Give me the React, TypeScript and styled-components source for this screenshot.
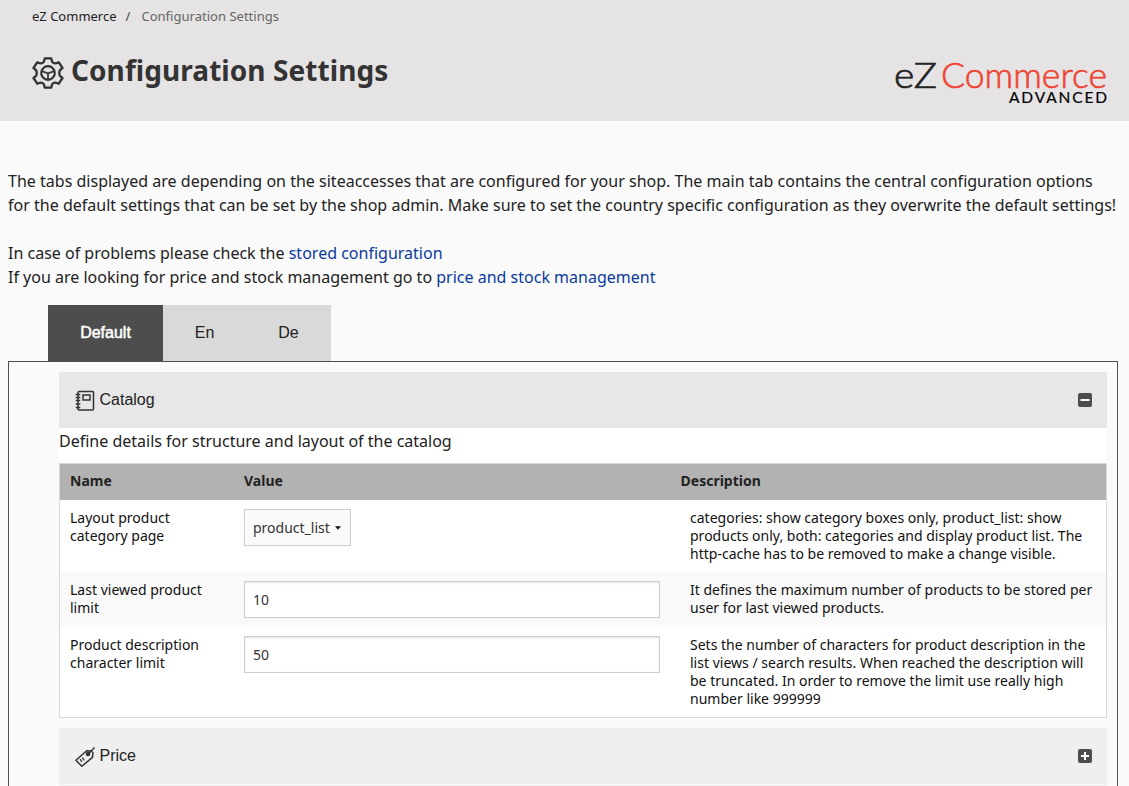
import React from "react";
import styled, { createGlobalStyle } from "styled-components";

const noto = `"Noto Sans", "Open Sans", sans-serif`;
const helvetica = `"Liberation Sans", Arial, sans-serif`;

const GlobalStyle = createGlobalStyle`
  *, *::before, *::after { box-sizing: border-box; }
  body { margin: 0; background: #fafafa; color: #222; font-family: ${noto}; overflow: hidden; }
`;

const Page = styled.div`
  height: 786px;
  overflow: hidden;
`;
const Header = styled.header`
  height: 121px;
  background: #e5e3e4;
  padding: 7px 21px 0 32px;
`;
const Breadcrumb = styled.nav`
  display: flex;
  font-size: 13px;
  line-height: 18px;
  color: #222;
`;
const Slash = styled.span`
  margin: 0 11px 0 9px;
  color: #444;
`;
const Current = styled.span`
  color: #666;
  letter-spacing: 0.02px;
`;
const TitleRow = styled.div`
  display: flex;
  justify-content: space-between;
  align-items: flex-start;
`;
const Title = styled.h1`
  display: flex;
  gap: 7px;
  margin: 25px 0 0;
  font-size: 28px;
  line-height: 40px;
  font-weight: 700;
  letter-spacing: 0.07px;
  color: #333;
  white-space: nowrap;
  svg { margin-top: 7px; }
`;
const Logo = styled.svg`
  margin-top: 20px;
`;
const Main = styled.main`
  padding: 48px 0 0 8px;
`;
const Intro = styled.p`
  margin: 0 0 24px;
  font-size: 16px;
  line-height: 24px;
  letter-spacing: 0.01px;
  white-space: nowrap;
`;
const Links = styled(Intro)`
  margin-bottom: 16px;
  letter-spacing: 0.004px;
`;
const Link = styled.a`
  color: #0b3a9c;
  text-decoration: none;
`;
const Tabs = styled.div`
  display: flex;
  margin-left: 40px;
`;
const Tab = styled.button<{ $active?: boolean; $width: number }>`
  width: ${(p) => p.$width}px;
  height: 56px;
  border: 0;
  padding: 0 0 1px;
  background: ${(p) => (p.$active ? "#4d4d4d" : "#d9d9d9")};
  color: ${(p) => (p.$active ? "#fff" : "#222")};
  -webkit-text-stroke: ${(p) => (p.$active ? "0.5px #fff" : "0")};
  font: 16px/24px ${helvetica};
`;
const Panel = styled.section`
  width: 1110px;
  height: 500px;
  border: 1px solid #4d4d4d;
  padding: 10px 10px 0 50px;
`;
const SectionHead = styled.div<{ $open?: boolean }>`
  display: flex;
  align-items: center;
  height: 56px;
  padding: 0 15px 0 16px;
  background: ${(p) => (p.$open ? "#e7e7e7" : "#efefef")};
  font: 16px/24px ${helvetica};
  > svg:first-child { margin-top: 2px; }
  > span { flex: 1; margin-left: 4.5px; }
`;
const SectionBody = styled.div`
  background: #fff;
  margin-bottom: 10px;
`;
const Lead = styled.p`
  margin: 0;
  height: 35px;
  font-size: 16px;
  line-height: 26px;
`;
const Table = styled.div`
  border: 1px solid #d9d9d9;
`;
const Row = styled.div<{ $height: number; $tint?: boolean }>`
  display: grid;
  grid-template-columns: 174px 446px 1fr;
  height: ${(p) => p.$height}px;
  padding: 9px 0 0 10px;
  background: ${(p) => (p.$tint ? "#f9f9f9" : "#fff")};
  color: #111;
  font-size: 14px;
  line-height: 18px;
  letter-spacing: 0.01px;
  white-space: nowrap;
`;
const HeadRow = styled(Row)`
  grid-template-columns: 174px 436.5px 1fr;
  background: #b2b2b2;
  color: #222;
  padding-top: 8px;
  font-weight: 700;
`;
const Select = styled.button`
  display: flex;
  align-items: center;
  gap: 5px;
  width: 107px;
  height: 37px;
  padding: 0 8px;
  border: 1px solid #ccc;
  background: #fafafa;
  color: #333;
  font: 14px/18px ${noto};
`;
const Input = styled.input`
  width: 416px;
  height: 37px;
  padding: 0 8px 1px;
  border: 1px solid #ccc;
  border-radius: 0;
  background: #fff;
  box-shadow: inset 0 1px 2px rgba(0, 0, 0, 0.1);
  color: #333;
  font: 14px/18px ${noto};
`;
const NextHead = styled.div`
  height: 20px;
  margin-top: 1px;
  background: #efefef;
`;

const GearIcon = () => (
  <svg width="32" height="32" viewBox="0 0 32 32" fill="none" stroke="#333" strokeWidth="2.3" strokeLinejoin="round">
    <path d="M12.8 1.3h6.4l.9 3.500Q22 7 24.300 6.200L26.600 5.200 30.500 11l-2.500 2.100Q26.500 16 28 18.900l2.500 2.100-3.900 5.800-2.300-1Q22 25 20.100 27.200l-.9 3.500h-6.400l-.9-3.500Q10 25 7.700 25.800L5.400 26.800 1.500 21l2.500-2.100Q5.500 16 4 13.100L1.500 11 5.400 5.200l2.300 1Q10 7 11.900 4.800z" />
    <circle cx="16" cy="16" r="6.8" strokeWidth="2.2" />
    <path d="M16 16.500v6M16 16.500l-6-2.400M16 16.500l6-2.400" strokeWidth="1.700" />
    <circle cx="16" cy="16.500" r="1" fill="#333" stroke="none" />
  </svg>
);

const CatalogIcon = () => (
  <svg width="20" height="22" viewBox="0 0 20 22" fill="none" stroke="#333" strokeWidth="1.5">
    <rect x="3" y="1.5" width="15.5" height="18.5" rx="1" />
    <rect x="8" y="5" width="7" height="5" />
    <path d="M.7 4.5h4.6M.7 7.5h4.6M.7 10.5h4.6M.7 14h4.6M.7 17.5h4.6" strokeWidth="1.3" />
  </svg>
);

const PriceIcon = () => (
  <svg width="20" height="22" viewBox="0 0 20 22" fill="none" stroke="#333" strokeWidth="1.5" strokeLinejoin="round">
    <path d="M.9 14.300L11.700 4.800l4.700.1 1.600 2-.6 4.500L6.900 20.300z" />
    <circle cx="13" cy="8" r="1.600" fill="#333" />
    <path d="M13.400 8l6.200-6.600" />
    <path d="M5 13.200l1.900 2.800M7.300 11.600l1.900 2.800" strokeWidth="1.300" />
  </svg>
);

const ToggleIcon = ({ plus }: { plus?: boolean }) => (
  <svg width="14" height="14" viewBox="0 0 14 14">
    <rect width="14" height="14" rx="2" fill="#4d4d4d" />
    <path d={plus ? "M3 7h8M7 3v8" : "M2.5 7h9"} stroke="#fff" strokeWidth="2" />
  </svg>
);

const Caret = () => (
  <svg width="6" height="4" viewBox="0 0 6 4">
    <path d="M0 0.3h6L3 3.7z" fill="#111" />
  </svg>
);

export default function App() {
  return (
    <Page>
      <GlobalStyle />
      <Header>
        <Breadcrumb>
          <span>eZ Commerce</span>
          <Slash>/</Slash>
          <Current>Configuration Settings</Current>
        </Breadcrumb>
        <TitleRow>
          <Title>
            <GearIcon />
            Configuration Settings
          </Title>
          <Logo width="215" height="72" viewBox="0 -10 215 72" fontFamily="Lato, sans-serif">
            <text x="1" y="32.5" fontSize="36" fill="#222" stroke="#222" strokeWidth="0.7" fontWeight="300" textLength="43" lengthAdjust="spacingAndGlyphs">eZ</text>
            <text x="48" y="32.5" fontSize="35" fill="#ef4433" stroke="#ef4433" strokeWidth="0.6" fontWeight="300" textLength="166" lengthAdjust="spacingAndGlyphs">Commerce</text>
            <text x="116" y="48" fontSize="15.5" fill="#000" stroke="#000" strokeWidth="0.2" fontWeight="400" textLength="98">ADVANCED</text>
          </Logo>
        </TitleRow>
      </Header>
      <Main>
        <Intro>
          The tabs displayed are depending on the siteaccesses that are configured for your shop. The main tab contains the central configuration options<br />
          for the default settings that can be set by the shop admin. Make sure to set the country specific configuration as they overwrite the default settings!
        </Intro>
        <Links>
          In case of problems please check the <Link>stored configuration</Link><br />
          If you are looking for price and stock management go to <Link>price and stock management</Link>
        </Links>
        <Tabs>
          <Tab $active $width={115}>Default</Tab>
          <Tab $width={83}>En</Tab>
          <Tab $width={85}>De</Tab>
        </Tabs>
        <Panel>
          <SectionHead $open>
            <CatalogIcon />
            <span>Catalog</span>
            <ToggleIcon />
          </SectionHead>
          <SectionBody>
            <Lead>Define details for structure and layout of the catalog</Lead>
            <Table>
              <HeadRow $height={36}>
                <span>Name</span>
                <span>Value</span>
                <span>Description</span>
              </HeadRow>
              <Row $height={72}>
                <span>Layout product<br />category page</span>
                <Select>product_list<Caret /></Select>
                <span>
                  categories: show category boxes only, product_list: show<br />
                  products only, both: categories and display product list. The<br />
                  http-cache has to be removed to make a change visible.
                </span>
              </Row>
              <Row $height={55} $tint>
                <span>Last viewed product<br />limit</span>
                <Input defaultValue="10" />
                <span>
                  It defines the maximum number of products to be stored per<br />
                  user for last viewed products.
                </span>
              </Row>
              <Row $height={90}>
                <span>Product description<br />character limit</span>
                <Input defaultValue="50" />
                <span>
                  Sets the number of characters for product description in the<br />
                  list views / search results. When reached the description will<br />
                  be truncated. In order to remove the limit use really high<br />
                  number like 999999
                </span>
              </Row>
            </Table>
          </SectionBody>
          <SectionHead>
            <PriceIcon />
            <span>Price</span>
            <ToggleIcon plus />
          </SectionHead>
          <NextHead />
        </Panel>
      </Main>
    </Page>
  );
}
